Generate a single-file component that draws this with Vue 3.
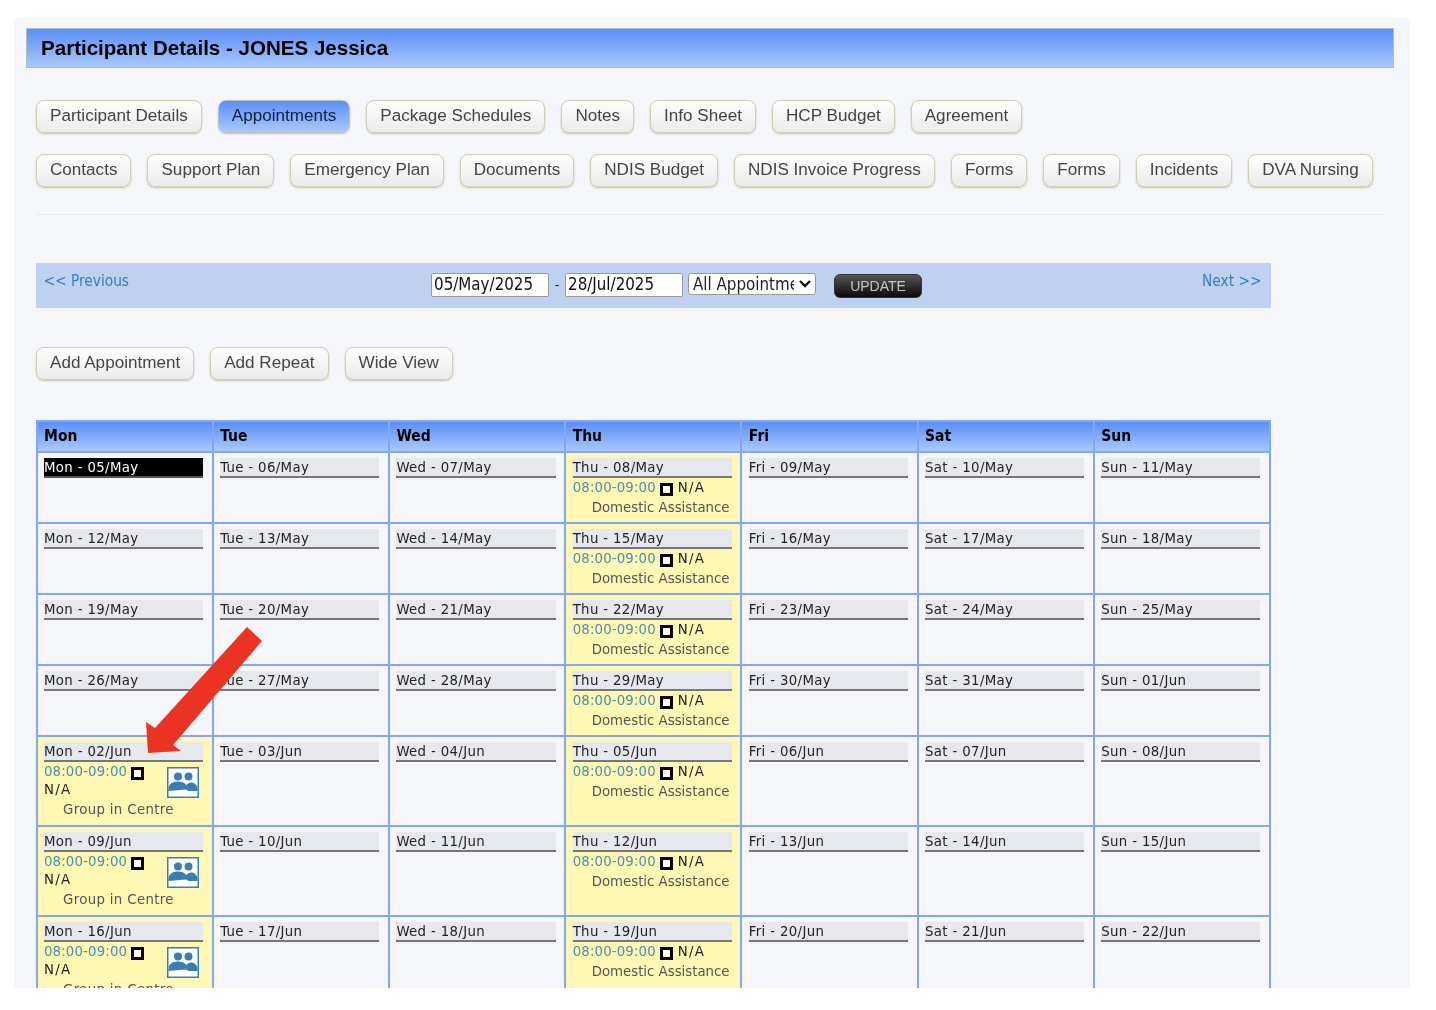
<script setup>
const row1 = ['Participant Details', 'Appointments', 'Package Schedules', 'Notes', 'Info Sheet', 'HCP Budget', 'Agreement']
const row2 = ['Contacts', 'Support Plan', 'Emergency Plan', 'Documents', 'NDIS Budget', 'NDIS Invoice Progress', 'Forms', 'Forms', 'Incidents', 'DVA Nursing']
const actions = ['Add Appointment', 'Add Repeat', 'Wide View']
const days = ['Mon', 'Tue', 'Wed', 'Thu', 'Fri', 'Sat', 'Sun']
const weeks = [
  ['05/May', '06/May', '07/May', '08/May', '09/May', '10/May', '11/May'],
  ['12/May', '13/May', '14/May', '15/May', '16/May', '17/May', '18/May'],
  ['19/May', '20/May', '21/May', '22/May', '23/May', '24/May', '25/May'],
  ['26/May', '27/May', '28/May', '29/May', '30/May', '31/May', '01/Jun'],
  ['02/Jun', '03/Jun', '04/Jun', '05/Jun', '06/Jun', '07/Jun', '08/Jun'],
  ['09/Jun', '10/Jun', '11/Jun', '12/Jun', '13/Jun', '14/Jun', '15/Jun'],
  ['16/Jun', '17/Jun', '18/Jun', '19/Jun', '20/Jun', '21/Jun', '22/Jun'],
]
const cells = weeks.flatMap((w, wi) =>
  w.map((date, di) => ({
    key: wi + '-' + di,
    label: days[di] + ' - ' + date,
    today: wi === 0 && di === 0,
    thu: di === 3,
    group: di === 0 && wi >= 4,
  }))
)
</script>

<template>
  <div class="panel">
    <h1 class="title">Participant Details - JONES Jessica</h1>

    <div class="tabs first">
      <a v-for="t in row1" :key="t" class="btn" :class="{ active: t === 'Appointments' }">{{ t }}</a>
    </div>
    <div class="tabs second">
      <a v-for="(t, i) in row2" :key="i" class="btn">{{ t }}</a>
    </div>
    <div class="rule"></div>

    <div class="nav">
      <a class="link">&lt;&lt; Previous</a>
      <div class="filters">
        <input class="date" value="05/May/2025" readonly />
        <span class="dash">-</span>
        <input class="date" value="28/Jul/2025" readonly />
        <span class="selwrap">
          <select class="sel"><option>All Appointments</option></select>
          <svg class="chev" width="14" height="10" viewBox="0 0 14 10"><path d="M2 2l5 5 5-5" fill="none" stroke="#111" stroke-width="2.4" /></svg>
        </span>
        <button class="update">UPDATE</button>
      </div>
      <a class="link">Next &gt;&gt;</a>
    </div>

    <div class="tabs actions">
      <a v-for="t in actions" :key="t" class="btn">{{ t }}</a>
    </div>

    <div class="calendar">
      <div v-for="d in days" :key="d" class="head">{{ d }}</div>
      <div v-for="c in cells" :key="c.key" class="cell" :class="{ booked: c.thu || c.group }">
        <div class="dayline" :class="{ today: c.today }">{{ c.label }}</div>
        <div v-if="c.thu" class="appt">
          <div class="line"><span class="time">08:00-09:00</span><i class="box"></i><span class="who">N/A</span></div>
          <div class="service">Domestic Assistance</div>
        </div>
        <div v-if="c.group" class="appt">
          <svg class="people" width="32" height="31" viewBox="0 0 32 31">
            <rect x="0.75" y="0.75" width="30.5" height="29.5" fill="#fff" stroke="#3a7db3" stroke-width="1.5" />
            <circle cx="11" cy="9.5" r="4" fill="#3a7db3" />
            <circle cx="21.500" cy="9.5" r="4" fill="#3a7db3" />
            <path d="M1.500 24v-2c0-5 4-7.500 9.500-7.500 3.500 0 6.500 1 8.500 3.500 1-1.500 2.500-2.500 4.500-2.500 3.500 0 6 2.500 6.500 5.500v3H21.500c-1-1-2-1.500-3-1.500Z" fill="#3a7db3" />
          </svg>
          <div class="line"><span class="time">08:00-09:00</span><i class="box"></i></div>
          <div class="who solo">N/A</div>
          <div class="service narrow">Group in Centre</div>
        </div>
      </div>
    </div>

    <svg class="arrow" width="130" height="140" viewBox="0 0 130 140">
      <polygon points="104,4 119,18 30,122 38,128 5,130 3,99 12,105" fill="#ea3323" />
    </svg>
  </div>
</template>

<style>
html, body { background: #fff; margin: 0; }
</style>

<style scoped>
.panel {
  position: relative;
  box-sizing: border-box;
  width: 1396px;
  height: 970px;
  margin: 18px 0 0 14px;
  padding: 10px 16px 0 12px;
  background: #f4f6f9;
  overflow: hidden;
  font-family: "DejaVu Sans Condensed", "DejaVu Sans", sans-serif;
  font-stretch: condensed;
  filter: blur(0.35px);
}
.title {
  box-sizing: border-box;
  height: 40px;
  margin: 0;
  padding: 0 0 0 14px;
  border: 1px solid #b5bcc4;
  background: linear-gradient(#5a8ff5, #a9c8fb);
  color: #000;
  font: bold 20.550px/38px "Liberation Sans", sans-serif;
}
.tabs { display: flex; margin-left: 10px; gap: 16px; }
.first { margin-top: 32px; }
.second { margin-top: 21px; }
.actions { margin-top: 39px; }
.btn {
  box-sizing: border-box;
  height: 33px;
  padding: 0 13px;
  border: 1px solid #cfcfb4;
  border-radius: 8px;
  background: linear-gradient(#fefefe, #ebebeb);
  box-shadow: 0 1px 2px #c3c3ae;
  color: #444;
  font: 17.100px/29px "Liberation Sans", sans-serif;
  white-space: nowrap;
}
.btn.active {
  background: linear-gradient(#5a8ff5, #a9c8fb);
  border-color: #b9c4c8;
  color: #10203a;
}
.rule {
  height: 1px;
  margin: 27px 10px 0 10px;
  background: #e9ebee;
}
.nav {
  box-sizing: border-box;
  display: flex;
  justify-content: space-between;
  width: 1235px;
  height: 45px;
  margin: 48px 0 0 10px;
  padding: 8px 9.500px 0 7.500px;
  background: #bed1f0;
}
.link {
  color: #3a7db3;
  font-size: 15.300px;
  line-height: 20px;
}
.filters {
  display: flex;
  align-items: flex-start;
  height: 26px;
  margin-top: 2px;
  margin-left: 22px;
}
.date {
  box-sizing: border-box;
  width: 118px;
  height: 24px;
  padding: 0 2px 2px;
  border: 1px solid #999;
  border-radius: 2px;
  background: #fff;
  color: #111;
  font-family: inherit;
  font-stretch: condensed;
  font-size: 16.800px;
  outline: none;
}
.dash { width: 16px; text-align: center; color: #222; font-size: 14px; line-height: 24px; }
.selwrap { position: relative; width: 128px; height: 22px; margin-left: 5px; }
.sel {
  appearance: none;
  box-sizing: border-box;
  width: 100%;
  height: 100%;
  padding: 0 21px 0 4px;
  border: 1px solid #999;
  border-radius: 3px;
  background: #fff;
  color: #222;
  font-family: inherit;
  font-stretch: condensed;
  font-size: 16.800px;
}
.chev { position: absolute; right: 4px; top: 6px; pointer-events: none; }
.update {
  width: 88px;
  height: 24px;
  margin: 1px 0 0 18px;
  padding: 0;
  border: 1px solid #333;
  border-radius: 6px;
  background: linear-gradient(#555, #0a0a0a);
  color: #c4c4c4;
  font: 14px "Liberation Sans", sans-serif;
}
.calendar {
  display: grid;
  grid-template-columns: repeat(7, 1fr);
  grid-template-rows: 31px repeat(4, 71px) repeat(3, 90px);
  width: 1235.500px;
  margin: 40px 0 0 9.500px;
  border-top: 2px solid #85a5f5;
  border-left: 2px solid #85a5f5;
  box-sizing: border-box;
}
.head {
  padding-left: 6.500px;
  border-right: 2px solid #85a5f5;
  border-bottom: 2px solid #85a5f5;
  background: linear-gradient(#5a8ff5, #a9c8fb);
  color: #000;
  font-weight: bold;
  font-size: 15.500px;
  line-height: 28px;
}
.cell {
  box-sizing: border-box;
  min-width: 0;
  padding: 5px 8.500px 0 6.500px;
  border-right: 2px solid #85a5f5;
  border-bottom: 2px solid #85a5f5;
  color: #111;
  font-size: 14.800px;
}
.cell.booked { background: #fdf8b4; }
.dayline {
  box-sizing: border-box;
  height: 20px;
  border-bottom: 2px solid #777;
  background: #e6e8ee;
  color: #222;
  line-height: 18px;
  letter-spacing: 0.350px;
  white-space: nowrap;
}
.dayline.today { background: #000; color: #fff; border-bottom-color: #555; }
.appt { position: relative; margin-top: -1px; }
.line { display: flex; align-items: center; height: 18px; margin-bottom: 2px; }
.time { color: #4a8fb0; letter-spacing: 0.150px; }
.box {
  box-sizing: border-box;
  width: 13px;
  height: 13px;
  margin: 6px 5px 0 4px;
  border: 3px solid #000;
  background: #fff;
}
.who { color: #222; letter-spacing: 1.300px; }
.who.solo { height: 19px; margin-top: -1px; line-height: 18px; }
.service { padding-left: 19px; height: 20px; line-height: 20px; color: #555; white-space: nowrap; }
.service.narrow { letter-spacing: 0.350px; }
.people { position: absolute; right: 4px; top: 6px; }
.arrow { position: absolute; left: 129px; top: 605px; }
</style>
